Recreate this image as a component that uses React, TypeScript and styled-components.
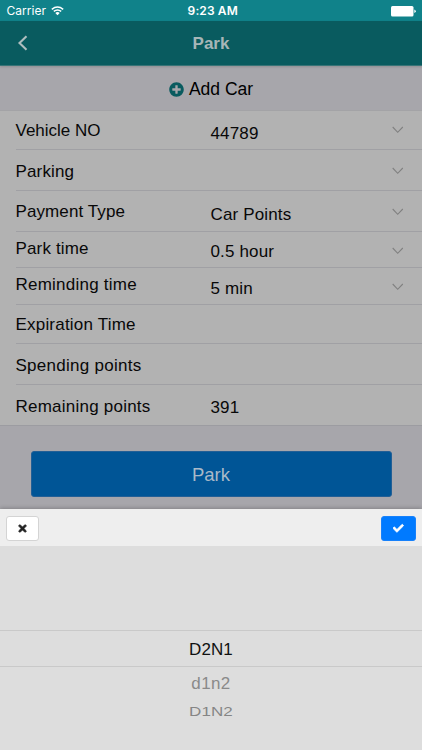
import React from "react";
import styled, { createGlobalStyle } from "styled-components";
import { FaCheck, FaTimes, FaPlusCircle } from "react-icons/fa";

const GlobalStyle = createGlobalStyle`
  * { box-sizing: border-box; }
  body {
    margin: 0;
    background: #a7a6ab;
    font-family: "Liberation Sans", Arial, sans-serif;
    overflow: hidden;
  }
`;

const Screen = styled.div`
  width: 422px;
  height: 750px;
  display: flex;
  flex-direction: column;
  background: #a7a6ab;
  overflow: hidden;
`;

const StatusBar = styled.div`
  flex: none;
  height: 21px;
  display: grid;
  grid-template-columns: 1fr auto 1fr;
  align-items: center;
  padding: 1px 6px 0 6.5px;
  background: #10828a;
  color: #fff;
  font-family: Inter, sans-serif;
  font-size: 12px;
  line-height: 18px;
`;

const Carrier = styled.div`
  display: flex;
  align-items: center;
  gap: 5px;
  letter-spacing: 0.05px;
`;

const Clock = styled.div`
  margin-left: 3px;
  font-weight: 600;
  font-size: 12px;
  letter-spacing: 0.12px;
`;

const Battery = styled.svg`
  justify-self: end;
`;

const Header = styled.header`
  flex: none;
  height: 45px;
  display: grid;
  grid-template-columns: 60px 1fr 60px;
  align-items: center;
  background: #095b5f;
  border-bottom: 1px solid #387477;
  box-shadow: 0 1px 2px rgba(0, 0, 0, 0.14);
  svg { margin-left: 17px; margin-top: -1px; }
`;

const Title = styled.h1`
  margin: 1px 0 0;
  color: #a6b6b7;
  font-size: 17px;
  line-height: 22px;
  text-align: center;
`;

const AddCar = styled.div`
  flex: none;
  height: 44px;
  display: flex;
  align-items: center;
  justify-content: center;
  gap: 5px;
  padding-top: 3px;
  color: #000;
  font-size: 17.5px;
  svg { color: #095b5f; margin-top: -1px; }
`;

const List = styled.div`
  flex: none;
  background: #b2b2b2;
  border-top: 1px solid #a3a3a6;
  border-bottom: 1px solid #9c9ca1;
`;

const Row = styled.div<{ $height: number }>`
  height: ${(p) => p.$height}px;
  margin-left: 15.5px;
  display: grid;
  grid-template-columns: 195px 1fr 30.5px;
  align-items: start;
  border-bottom: 1px solid #a0a0a4;
  &:last-child { border-bottom: none; }
`;

const Text = styled.span<{ $top: number; $spacing?: number }>`
  margin-top: ${(p) => p.$top}px;
  color: #080808;
  font-size: 17px;
  line-height: 20px;
  letter-spacing: ${(p) => p.$spacing ?? 0}px;
  white-space: nowrap;
`;

const Chevron = styled.svg<{ $top: number }>`
  margin-top: ${(p) => p.$top}px;
`;

const Action = styled.div`
  flex: none;
  height: 83px;
  padding: 25px 30.5px 0;
`;

const ParkButton = styled.button`
  display: block;
  width: 100%;
  height: 46px;
  padding: 1px 0 0;
  border: 1px solid #225f96;
  border-radius: 3px;
  background: #005596;
  color: #a9b9c8;
  font: 18.5px "Liberation Sans", Arial, sans-serif;
`;

const Sheet = styled.section`
  flex: 1;
  background: #ddd;
  box-shadow: 0 -1px 4px rgba(0, 0, 0, 0.22);
`;

const Toolbar = styled.div`
  height: 37px;
  display: flex;
  justify-content: space-between;
  align-items: center;
  padding: 1px 6px 0;
  background: #eee;
`;

const ToolButton = styled.button<{ $primary?: boolean }>`
  width: ${(p) => (p.$primary ? 35 : 33)}px;
  height: 25px;
  display: flex;
  align-items: center;
  justify-content: center;
  padding: 0;
  border: 1px solid ${(p) => (p.$primary ? "#1781fb" : "#d4d4d4")};
  border-radius: 3px;
  background: ${(p) => (p.$primary ? "#007aff" : "#fff")};
  color: ${(p) => (p.$primary ? "#fff" : "#222")};
`;

const Wheel = styled.div`
  padding-top: 84px;
  text-align: center;
`;

const Option = styled.div<{ $state: "selected" | "near" | "far" }>`
  height: ${(p) => (p.$state === "selected" ? 37 : p.$state === "near" ? 33 : 24)}px;
  line-height: ${(p) => (p.$state === "selected" ? 37 : p.$state === "near" ? 34 : 24)}px;
  border-style: solid;
  border-width: ${(p) => (p.$state === "selected" ? "1px 0" : "0")};
  border-color: #c9c9c9;
  color: ${(p) => (p.$state === "selected" ? "#111" : p.$state === "near" ? "#8a8a8a" : "#858585")};
  font-size: 17px;
  letter-spacing: ${(p) => (p.$state === "near" ? 0.4 : 0.1)}px;
  transform: scaleY(${(p) => (p.$state === "far" ? 0.76 : 1)});
`;

type RowData = {
  label: string;
  value?: string;
  height: number;
  labelTop: number;
  valueTop?: number;
  chevronTop?: number;
  spacing?: number;
};

const rows: RowData[] = [
  { label: "Vehicle NO", value: "44789", height: 39, labelTop: 10, valueTop: 13, chevronTop: 15 },
  { label: "Parking", height: 41, labelTop: 12, chevronTop: 17, spacing: 0.15 },
  { label: "Payment Type", value: "Car Points", height: 41, labelTop: 11, valueTop: 14, chevronTop: 17, spacing: 0.1 },
  { label: "Park time", value: "0.5 hour", height: 36, labelTop: 7, valueTop: 10, chevronTop: 15, spacing: 0.15 },
  { label: "Reminding time", value: "5 min", height: 37, labelTop: 7, valueTop: 11, chevronTop: 15, spacing: 0.23 },
  { label: "Expiration Time", height: 39, labelTop: 10, spacing: 0.2 },
  { label: "Spending points", height: 41, labelTop: 12, spacing: 0.28 },
  { label: "Remaining points", value: "391", height: 40, labelTop: 12, valueTop: 13, spacing: 0.23 },
];

export default function App() {
  return (
    <>
      <GlobalStyle />
      <Screen>
        <StatusBar>
          <Carrier>
            Carrier
            <svg width="13" height="10" viewBox="0 0 13 10" fill="none" stroke="#fff" strokeWidth="1.5">
              <path d="M.8 3.3Q6.5-1.2 12.2 3.3M2.8 5.4Q6.5 2.5 10.2 5.4" />
              <path d="M4.3 7Q6.5 5.2 8.7 7L6.5 9.3Z" fill="#fff" stroke="none" />
            </svg>
          </Carrier>
          <Clock>9:23 AM</Clock>
          <Battery width="25" height="11" viewBox="0 0 25 11" fill="#fff">
            <rect x="0" y="0" width="22.5" height="10.5" rx="1.5" />
            <path d="M23.3 3.5Q24.8 4 24.8 5.3T23.3 7Z" />
          </Battery>
        </StatusBar>
        <Header>
          <svg width="12" height="16" viewBox="0 0 12 16" fill="none" stroke="#afbebf" strokeWidth="2.1">
            <path d="M9.5 1.3L2.5 8L9.5 14.7" />
          </svg>
          <Title>Park</Title>
        </Header>
        <AddCar>
          <FaPlusCircle size={15} />
          <span>Add Car</span>
        </AddCar>
        <List>
          {rows.map((row) => (
            <Row key={row.label} $height={row.height}>
              <Text $top={row.labelTop} $spacing={row.spacing}>{row.label}</Text>
              <Text $top={row.valueTop ?? 0} $spacing={0.15}>{row.value}</Text>
              {row.chevronTop !== undefined && (
                <Chevron $top={row.chevronTop} width="12" height="8" viewBox="0 0 12 8" fill="none" stroke="#808080" strokeWidth="1.1">
                  <path d="M.7 1L5.7 6.3L10.8 1" />
                </Chevron>
              )}
            </Row>
          ))}
        </List>
        <Action>
          <ParkButton>Park</ParkButton>
        </Action>
        <Sheet>
          <Toolbar>
            <ToolButton aria-label="Cancel"><FaTimes size={11} stroke="currentColor" strokeWidth={35} /></ToolButton>
            <ToolButton aria-label="Confirm" $primary><FaCheck size={10.5} stroke="currentColor" strokeWidth={35} /></ToolButton>
          </Toolbar>
          <Wheel>
            <Option $state="selected">D2N1</Option>
            <Option $state="near">d1n2</Option>
            <Option $state="far">D1N2</Option>
          </Wheel>
        </Sheet>
      </Screen>
    </>
  );
}
